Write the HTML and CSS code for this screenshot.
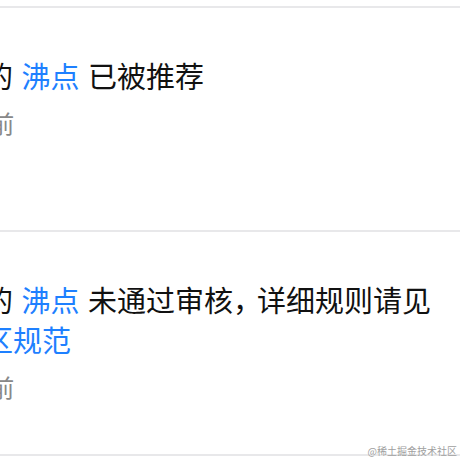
FILE: index.html
```html
<!DOCTYPE html>
<html lang="zh-CN">
<head>
<meta charset="utf-8">
<title>消息</title>
<link rel="stylesheet" href="styles.css">
</head>
<body>
<div class="page">
  <div class="feed">
    <div class="item">
      <p class="msg">你的 <span class="link">沸点</span> 已被推荐</p>
      <p class="time">3天前</p>
    </div>
    <div class="item">
      <p class="msg">你的 <span class="link">沸点</span> 未通过审核<span class="punct">，</span>详细规则请见社<span class="link">区规范</span></p>
      <p class="time">3天前</p>
    </div>
    <div class="item"></div>
  </div>
  <div class="watermark">@稀土掘金技术社区</div>
</div>
</body>
</html>
```
FILE: styles.css
```css
html, body {
  margin: 0;
  padding: 0;
  background: #ffffff;
}
.page {
  position: relative;
  width: 460px;
  height: 460px;
  overflow: hidden;
  padding-top: 6px;
  box-sizing: border-box;
  font-family: "Noto Sans CJK SC", "Noto Sans", sans-serif;
}
.feed {
  margin-left: -45px;
  width: 505px;
}
.item {
  box-sizing: border-box;
  height: 224px;
  border-top: 2px solid #e8e8ea;
  padding-top: 47px;
}
.msg {
  margin: 0;
  font-size: 29px;
  font-weight: 400;
  line-height: 40px;
  word-spacing: 2px;
  color: #111111;
  width: 480px;
}
.link {
  color: #1e80ff;
}
.punct {
  margin-right: -5px;
}
.time {
  margin: 12px 0 0 -2px;
  font-size: 24px;
  line-height: 32px;
  color: #888888;
}
.watermark {
  position: absolute;
  right: 3px;
  bottom: 4px;
  font-size: 10px;
  line-height: 11px;
  color: #a0a0a0;
  font-family: "Noto Sans CJK SC", serif;
}
```
